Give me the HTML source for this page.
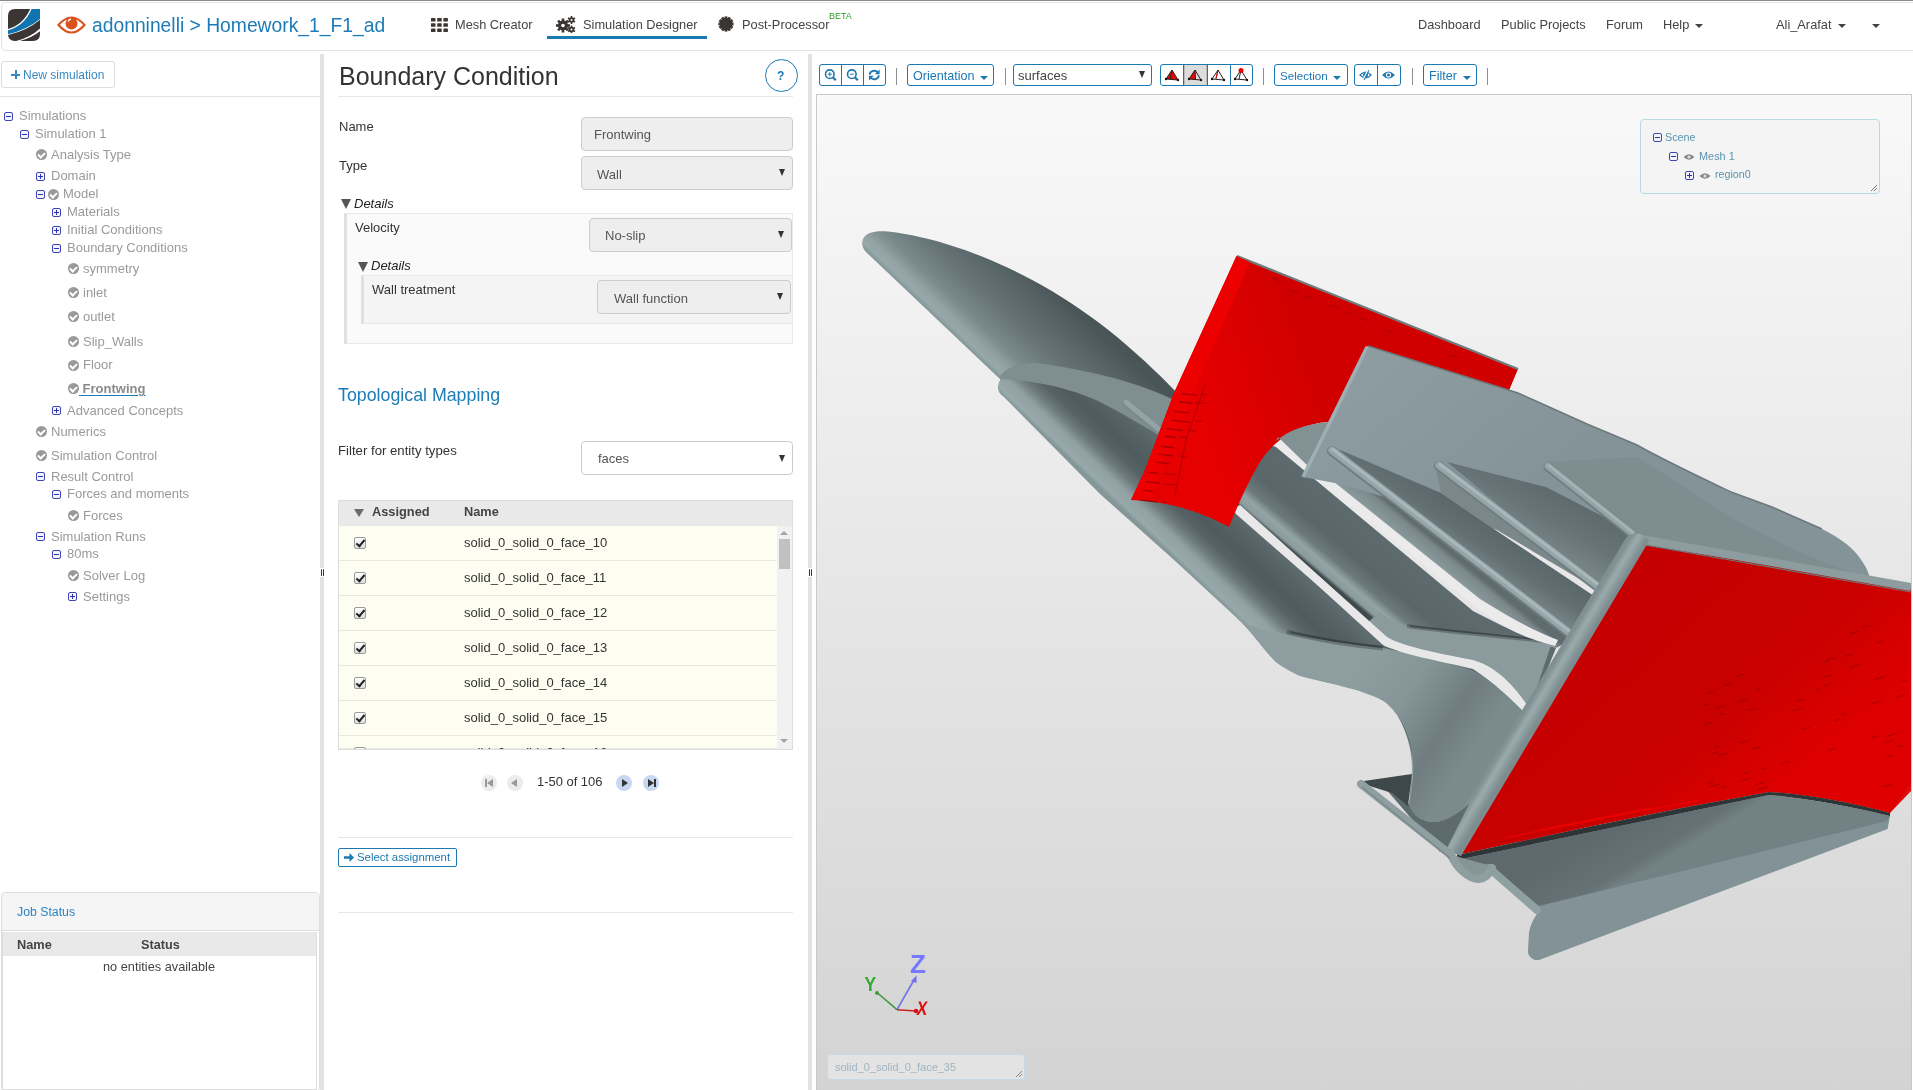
<!DOCTYPE html>
<html><head><meta charset="utf-8">
<style>
*{box-sizing:border-box}
html,body{margin:0;padding:0;width:1913px;height:1090px;overflow:hidden;background:#fff;font-family:"Liberation Sans",sans-serif;color:#333;-webkit-font-smoothing:antialiased}
.a{will-change:transform}
.a{position:absolute;white-space:nowrap}
#topline{position:absolute;left:0;top:0;width:1913px;height:1px;background:#8a8a8a}
#nav{position:absolute;left:1px;top:2px;width:1920px;height:49px;border:1px solid #e3e3e3;border-radius:4px;background:#fff}
.nt{font-size:12.8px;color:#444;line-height:14px}
.tree{font-size:13px;color:#9a9a9a;line-height:14px}
.ex{position:absolute;width:9px;height:9px;border:1px solid #3d45b5;border-radius:2px;background:#f4f4ff}
.ex:before{content:"";position:absolute;left:1px;top:3px;width:5px;height:1px;background:#2a33b0}
.ex.p:after{content:"";position:absolute;left:3px;top:1px;width:1px;height:5px;background:#2a33b0}
.ck{position:absolute;width:11px;height:11px;border-radius:50%;background:#999}
.ck:after{content:"";position:absolute;left:3px;top:2px;width:3px;height:5px;border:solid #fff;border-width:0 2px 2px 0;transform:rotate(45deg)}
.lbl{font-size:13px;color:#333;line-height:14px}
.inp{position:absolute;background:#eee;border:1px solid #ccc;border-radius:4px}
.sel:after{content:"";position:absolute;right:8px;top:14px;border-left:3px solid transparent;border-right:3px solid transparent;border-top:6px solid #333}
.it{font-size:13px;color:#555;line-height:14px}
.tb{position:absolute;top:64px;height:22px;border:1px solid #1b78b0;border-radius:3px;background:#fff}
.tbt{font-size:12.6px;color:#1b78b0;line-height:14px}
.sep{position:absolute;top:68px;width:2px;height:16px;background:#666}
.row{position:absolute;left:339px;width:438px;height:35px;background:#fdfdf1;border-bottom:1px solid #e6e6e6}
.cb{position:absolute;left:15px;width:12px;height:12px;border:1px solid #999;border-radius:2px;background:linear-gradient(#fff,#ddd)}
.cb:after{content:"";position:absolute;left:3px;top:0px;width:3px;height:7px;border:solid #222;border-width:0 2px 2px 0;transform:rotate(40deg)}
.rn{position:absolute;left:125px;font-size:13px;color:#333;line-height:14px}
</style></head><body>
<div id="topline"></div>
<div id="nav"></div>

<!-- logo -->
<svg class="a" style="left:8px;top:9px" width="32" height="32" viewBox="0 0 32 32">
<defs><clipPath id="lc"><path d="M0 0H32V25Q32 32 25 32H7Q0 32 0 25V7Q0 0 7 0Z"/></clipPath></defs>
<g clip-path="url(#lc)">
<rect width="32" height="32" fill="#3b3633"/>
<path d="M22.6 -1 Q15 17 -2 20.4 L-2 26.5 Q20 22 34 9 L34 -1Z" fill="#fff"/>
<path d="M24 -1 Q16.5 18 -2 21.6 L-2 25.6 Q20 21 34 8.2 L34 -1Z" fill="#0f74b0"/>
<path d="M34 17.5 Q23 29 4 33 L8 33 Q25 29 34 20.5Z" fill="#fff"/>
</g></svg>
<!-- eye -->
<svg class="a" style="left:57px;top:15px" width="29" height="20" viewBox="0 0 29 20">
<path d="M1.5 10 Q14.5 -5 27.5 10 Q14.5 25 1.5 10Z" fill="none" stroke="#d9531e" stroke-width="2.2"/>
<circle cx="14.5" cy="8.5" r="6" fill="#d9531e"/>
<path d="M11 6.5 Q12 4.5 14 4" stroke="#fff" stroke-width="1.3" fill="none"/>
</svg>
<div class="a" style="left:92px;top:15px;font-size:19.3px;color:#1c7cb8;line-height:22px">adonninelli &gt; Homework_1_F1_ad</div>

<!-- nav items -->
<svg class="a" style="left:431px;top:18px" width="17" height="14" viewBox="0 0 17 14" fill="#3b3633">
<rect x="0" y="0" width="4.5" height="3.6" rx=".6"/><rect x="6.2" y="0" width="4.5" height="3.6" rx=".6"/><rect x="12.4" y="0" width="4.5" height="3.6" rx=".6"/>
<rect x="0" y="5.2" width="4.5" height="3.6" rx=".6"/><rect x="6.2" y="5.2" width="4.5" height="3.6" rx=".6"/><rect x="12.4" y="5.2" width="4.5" height="3.6" rx=".6"/>
<rect x="0" y="10.4" width="4.5" height="3.6" rx=".6"/><rect x="6.2" y="10.4" width="4.5" height="3.6" rx=".6"/><rect x="12.4" y="10.4" width="4.5" height="3.6" rx=".6"/>
</svg>
<div class="a nt" style="left:455px;top:18px">Mesh Creator</div>
<svg class="a" style="left:556px;top:16px" width="20" height="17" viewBox="0 0 20 17">
<g fill="#3b3633"><circle cx="7" cy="9.5" r="5"/>
<g transform="translate(7 9.5)"><rect x="-1.3" y="-7" width="2.6" height="14"/><rect x="-1.3" y="-7" width="2.6" height="14" transform="rotate(45)"/><rect x="-1.3" y="-7" width="2.6" height="14" transform="rotate(90)"/><rect x="-1.3" y="-7" width="2.6" height="14" transform="rotate(135)"/></g>
<circle cx="15.5" cy="4" r="2.8"/><g transform="translate(15.5 4)"><rect x="-.8" y="-4" width="1.6" height="8"/><rect x="-.8" y="-4" width="1.6" height="8" transform="rotate(60)"/><rect x="-.8" y="-4" width="1.6" height="8" transform="rotate(120)"/></g>
<circle cx="15.5" cy="13.5" r="2.8"/><g transform="translate(15.5 13.5)"><rect x="-.8" y="-4" width="1.6" height="8"/><rect x="-.8" y="-4" width="1.6" height="8" transform="rotate(60)"/><rect x="-.8" y="-4" width="1.6" height="8" transform="rotate(120)"/></g>
</g>
<g fill="#fff"><circle cx="7" cy="9.5" r="1.8"/><circle cx="15.5" cy="4" r="1"/><circle cx="15.5" cy="13.5" r="1"/></g>
</svg>
<div class="a nt" style="left:583px;top:18px">Simulation Designer</div>
<div class="a" style="left:547px;top:36px;width:160px;height:3px;background:#1b78b0"></div>
<svg class="a" style="left:718px;top:16px" width="16" height="16" viewBox="0 0 16 16"><g fill="#3b3633" transform="translate(8 8)">
<circle r="6.3"/><rect x="-1.4" y="-7.6" width="2.8" height="15.2"/><rect x="-1.4" y="-7.6" width="2.8" height="15.2" transform="rotate(30)"/><rect x="-1.4" y="-7.6" width="2.8" height="15.2" transform="rotate(60)"/><rect x="-1.4" y="-7.6" width="2.8" height="15.2" transform="rotate(90)"/><rect x="-1.4" y="-7.6" width="2.8" height="15.2" transform="rotate(120)"/><rect x="-1.4" y="-7.6" width="2.8" height="15.2" transform="rotate(150)"/></g></svg>
<div class="a nt" style="left:742px;top:18px">Post-Processor</div>
<div class="a" style="left:829px;top:11px;font-size:9px;color:#2ea02e;line-height:10px">BETA</div>

<div class="a nt" style="left:1418px;top:18px">Dashboard</div>
<div class="a nt" style="left:1501px;top:18px">Public Projects</div>
<div class="a nt" style="left:1606px;top:18px">Forum</div>
<div class="a nt" style="left:1663px;top:18px">Help</div>
<div class="a" style="left:1695px;top:24px;border-left:4px solid transparent;border-right:4px solid transparent;border-top:4px solid #444"></div>
<div class="a nt" style="left:1776px;top:18px">Ali_Arafat</div>
<div class="a" style="left:1838px;top:24px;border-left:4px solid transparent;border-right:4px solid transparent;border-top:4px solid #444"></div>
<div class="a" style="left:1872px;top:24px;border-left:4px solid transparent;border-right:4px solid transparent;border-top:4px solid #444"></div>

<!-- SIDEBAR -->
<div class="a" style="left:1px;top:61px;width:114px;height:27px;border:1px solid #ddd;border-radius:3px"></div>
<div class="a" style="left:11px;top:70px;width:9px;height:9px"><div class="a" style="left:3.5px;top:0;width:2.2px;height:9px;background:#3a8ac0"></div><div class="a" style="left:0;top:3.5px;width:9px;height:2.2px;background:#3a8ac0"></div></div>
<div class="a" style="left:23px;top:68px;font-size:12px;color:#3a8ac0;line-height:14px">New simulation</div>
<div class="a" style="left:0;top:96px;width:320px;height:1px;background:#e3e3e3"></div>
<div class="a" style="left:320px;top:54px;width:4px;height:1036px;background:#e3e3e3"></div>
<div class="a" style="left:808px;top:54px;width:4px;height:1036px;background:#e3e3e3"></div>


<div class="a" style="left:320px;top:568px;width:4px;height:9px;background:#fff"></div>
<div class="a" style="left:321px;top:569px;width:1.2px;height:7px;background:#333;border-radius:1px"></div>
<div class="a" style="left:323px;top:569px;width:1.2px;height:7px;background:#333;border-radius:1px"></div>
<div class="a" style="left:808px;top:568px;width:4px;height:9px;background:#fff"></div>
<div class="a" style="left:809px;top:569px;width:1.2px;height:7px;background:#333;border-radius:1px"></div>
<div class="a" style="left:811px;top:569px;width:1.2px;height:7px;background:#333;border-radius:1px"></div>
<div class="ex" style="left:4px;top:111.8px"></div>
<div class="a" style="left:19px;top:109.30px;font-size:13px;line-height:13px;color:#9a9a9a;font-weight:400;font-style:normal;">Simulations</div>
<div class="ex" style="left:20px;top:129.7px"></div>
<div class="a" style="left:35px;top:127.20px;font-size:13px;line-height:13px;color:#9a9a9a;font-weight:400;font-style:normal;">Simulation 1</div>
<div class="ck" style="left:36px;top:149.2px"></div>
<div class="a" style="left:51px;top:147.80px;font-size:13px;line-height:13px;color:#9a9a9a;font-weight:400;font-style:normal;">Analysis Type</div>
<div class="ex p" style="left:36px;top:171.5px"></div>
<div class="a" style="left:51px;top:169.00px;font-size:13px;line-height:13px;color:#9a9a9a;font-weight:400;font-style:normal;">Domain</div>
<div class="ex" style="left:36px;top:189.8px"></div>
<div class="ck" style="left:48px;top:188.7px"></div>
<div class="a" style="left:63px;top:187.30px;font-size:13px;line-height:13px;color:#9a9a9a;font-weight:400;font-style:normal;">Model</div>
<div class="ex p" style="left:52px;top:207.5px"></div>
<div class="a" style="left:67px;top:205.00px;font-size:13px;line-height:13px;color:#9a9a9a;font-weight:400;font-style:normal;">Materials</div>
<div class="ex p" style="left:52px;top:225.5px"></div>
<div class="a" style="left:67px;top:223.00px;font-size:13px;line-height:13px;color:#9a9a9a;font-weight:400;font-style:normal;">Initial Conditions</div>
<div class="ex" style="left:52px;top:243.5px"></div>
<div class="a" style="left:67px;top:241.00px;font-size:13px;line-height:13px;color:#9a9a9a;font-weight:400;font-style:normal;">Boundary Conditions</div>
<div class="ck" style="left:68px;top:263.2px"></div>
<div class="a" style="left:83px;top:261.80px;font-size:13px;line-height:13px;color:#9a9a9a;font-weight:400;font-style:normal;">symmetry</div>
<div class="ck" style="left:68px;top:287.3px"></div>
<div class="a" style="left:83px;top:285.90px;font-size:13px;line-height:13px;color:#9a9a9a;font-weight:400;font-style:normal;">inlet</div>
<div class="ck" style="left:68px;top:311.4px"></div>
<div class="a" style="left:83px;top:310.00px;font-size:13px;line-height:13px;color:#9a9a9a;font-weight:400;font-style:normal;">outlet</div>
<div class="ck" style="left:68px;top:336.4px"></div>
<div class="a" style="left:83px;top:335.00px;font-size:13px;line-height:13px;color:#9a9a9a;font-weight:400;font-style:normal;">Slip_Walls</div>
<div class="ck" style="left:68px;top:359.8px"></div>
<div class="a" style="left:83px;top:358.40px;font-size:13px;line-height:13px;color:#9a9a9a;font-weight:400;font-style:normal;">Floor</div>
<div class="ck" style="left:68px;top:383.4px"></div>
<div class="a" style="left:79px;top:382.00px;font-size:13px;line-height:13px;color:#8a8a8a;font-weight:700;font-style:normal;text-decoration:underline;text-decoration-color:#1c7cb8;text-underline-offset:2px">&nbsp;Frontwing</div>
<div class="ex p" style="left:52px;top:406.1px"></div>
<div class="a" style="left:67px;top:403.60px;font-size:13px;line-height:13px;color:#9a9a9a;font-weight:400;font-style:normal;">Advanced Concepts</div>
<div class="ck" style="left:36px;top:426.0px"></div>
<div class="a" style="left:51px;top:424.60px;font-size:13px;line-height:13px;color:#9a9a9a;font-weight:400;font-style:normal;">Numerics</div>
<div class="ck" style="left:36px;top:450.0px"></div>
<div class="a" style="left:51px;top:448.60px;font-size:13px;line-height:13px;color:#9a9a9a;font-weight:400;font-style:normal;">Simulation Control</div>
<div class="ex" style="left:36px;top:472.4px"></div>
<div class="a" style="left:51px;top:469.90px;font-size:13px;line-height:13px;color:#9a9a9a;font-weight:400;font-style:normal;">Result Control</div>
<div class="ex" style="left:52px;top:489.9px"></div>
<div class="a" style="left:67px;top:487.40px;font-size:13px;line-height:13px;color:#9a9a9a;font-weight:400;font-style:normal;">Forces and moments</div>
<div class="ck" style="left:68px;top:509.9px"></div>
<div class="a" style="left:83px;top:508.50px;font-size:13px;line-height:13px;color:#9a9a9a;font-weight:400;font-style:normal;">Forces</div>
<div class="ex" style="left:36px;top:532.2px"></div>
<div class="a" style="left:51px;top:529.70px;font-size:13px;line-height:13px;color:#9a9a9a;font-weight:400;font-style:normal;">Simulation Runs</div>
<div class="ex" style="left:52px;top:549.8px"></div>
<div class="a" style="left:67px;top:547.30px;font-size:13px;line-height:13px;color:#9a9a9a;font-weight:400;font-style:normal;">80ms</div>
<div class="ck" style="left:68px;top:570.0px"></div>
<div class="a" style="left:83px;top:568.60px;font-size:13px;line-height:13px;color:#9a9a9a;font-weight:400;font-style:normal;">Solver Log</div>
<div class="ex p" style="left:68px;top:592.1px"></div>
<div class="a" style="left:83px;top:589.60px;font-size:13px;line-height:13px;color:#9a9a9a;font-weight:400;font-style:normal;">Settings</div>
<div class="a" style="left:1px;top:892px;width:319px;height:200px;border:1px solid #ddd;border-radius:4px;background:#fff"></div>
<div class="a" style="left:2px;top:893px;width:317px;height:38px;background:#f5f5f5;border-bottom:1px solid #ddd;border-radius:4px 4px 0 0"></div>
<div class="a" style="left:16.5px;top:906.19px;font-size:12.3px;line-height:12.3px;color:#2a86c0;font-weight:400;font-style:normal;">Job Status</div>
<div class="a" style="left:2px;top:932px;width:315px;height:158px;border:1px solid #ddd;border-top:0;background:#fff"></div>
<div class="a" style="left:3px;top:932px;width:313px;height:24px;background:#e9e9e9"></div>
<div class="a" style="left:17.3px;top:938.56px;font-size:12.8px;line-height:12.8px;color:#444;font-weight:700;font-style:normal;">Name</div>
<div class="a" style="left:141.4px;top:938.65px;font-size:12.7px;line-height:12.7px;color:#444;font-weight:700;font-style:normal;">Status</div>
<div class="a" style="left:102.8px;top:960.81px;font-size:12.75px;line-height:12.75px;color:#444;font-weight:400;font-style:normal;">no entities available</div>
<div class="a" style="left:339px;top:63.64px;font-size:25px;line-height:25px;color:#333;font-weight:400;font-style:normal;">Boundary Condition</div>
<div class="a" style="left:338px;top:96px;width:455px;height:1px;background:#e6e6e6"></div>
<div class="a" style="left:765px;top:59px;width:33px;height:33px;border:1px solid #1b78b0;border-radius:50%"></div>
<div class="a" style="left:776.5px;top:69.84px;font-size:12px;line-height:12px;color:#1b78b0;font-weight:700;font-style:normal;">?</div>
<div class="a" style="left:338.5px;top:120.00px;font-size:13px;line-height:13px;color:#333;font-weight:400;font-style:normal;">Name</div>
<div class="a" style="left:581px;top:117px;width:212px;height:34px;background:#eee;border:1px solid #ccc;border-radius:4px"></div>
<div class="a" style="left:593.6px;top:127.70px;font-size:13px;line-height:13px;color:#555;font-weight:400;font-style:normal;">Frontwing</div>
<div class="a" style="left:338.5px;top:159.00px;font-size:13px;line-height:13px;color:#333;font-weight:400;font-style:normal;">Type</div>
<div class="a" style="left:581px;top:156px;width:212px;height:34px;background:#eee;border:1px solid #ccc;border-radius:4px"></div>
<div class="a" style="left:597.3px;top:167.50px;font-size:13px;line-height:13px;color:#555;font-weight:400;font-style:normal;">Wall</div>
<div class="a" style="left:779px;top:169px;width:0px;height:0px;border-left:3.5px solid transparent;border-right:3.5px solid transparent;border-top:7px solid #333"></div>
<div class="a" style="left:341px;top:199px;width:0;height:0;border-left:5.5px solid transparent;border-right:5.5px solid transparent;border-top:10px solid #555"></div>
<div class="a" style="left:354px;top:196.90px;font-size:13px;line-height:13px;color:#222;font-weight:400;font-style:italic;">Details</div>
<div class="a" style="left:344px;top:213px;width:449px;height:131px;background:#fafafa;border:1px solid #e8e8e8;border-left:3px solid #e0e0e0"></div>
<div class="a" style="left:355px;top:221.00px;font-size:13px;line-height:13px;color:#333;font-weight:400;font-style:normal;">Velocity</div>
<div class="a" style="left:589px;top:218px;width:203px;height:34px;background:#eee;border:1px solid #ccc;border-radius:4px"></div>
<div class="a" style="left:605.3px;top:229.00px;font-size:13px;line-height:13px;color:#555;font-weight:400;font-style:normal;">No-slip</div>
<div class="a" style="left:778px;top:231px;width:0px;height:0px;border-left:3.5px solid transparent;border-right:3.5px solid transparent;border-top:7px solid #333"></div>
<div class="a" style="left:358px;top:262px;width:0;height:0;border-left:5.5px solid transparent;border-right:5.5px solid transparent;border-top:10px solid #555"></div>
<div class="a" style="left:371.2px;top:259.40px;font-size:13px;line-height:13px;color:#222;font-weight:400;font-style:italic;">Details</div>
<div class="a" style="left:361px;top:275px;width:431px;height:49px;background:#f4f4f4;border-top:1px solid #e8e8e8;border-bottom:1px solid #e8e8e8;border-left:3px solid #e0e0e0"></div>
<div class="a" style="left:372px;top:283.00px;font-size:13px;line-height:13px;color:#333;font-weight:400;font-style:normal;">Wall treatment</div>
<div class="a" style="left:597px;top:280px;width:194px;height:34px;background:#eee;border:1px solid #ccc;border-radius:4px"></div>
<div class="a" style="left:613.8px;top:291.60px;font-size:13px;line-height:13px;color:#555;font-weight:400;font-style:normal;">Wall function</div>
<div class="a" style="left:777px;top:293px;width:0px;height:0px;border-left:3.5px solid transparent;border-right:3.5px solid transparent;border-top:7px solid #333"></div>
<div class="a" style="left:338.3px;top:386.73px;font-size:17.8px;line-height:17.8px;color:#1c7cb8;font-weight:400;font-style:normal;">Topological Mapping</div>
<div class="a" style="left:338px;top:444.23px;font-size:13.2px;line-height:13.2px;color:#333;font-weight:400;font-style:normal;">Filter for entity types</div>
<div class="a" style="left:581px;top:441px;width:212px;height:34px;background:#fff;border:1px solid #ccc;border-radius:4px"></div>
<div class="a" style="left:597.6px;top:452.20px;font-size:13px;line-height:13px;color:#555;font-weight:400;font-style:normal;">faces</div>
<div class="a" style="left:779px;top:455px;width:0px;height:0px;border-left:3.5px solid transparent;border-right:3.5px solid transparent;border-top:7px solid #333"></div>
<div class="a" style="left:338px;top:500px;width:455px;height:250px;border:1px solid #ddd;background:#fff"></div>
<div class="a" style="left:339px;top:501px;width:453px;height:25px;background:#e9e9e9"></div>
<div class="a" style="left:354px;top:509px;width:0;height:0;border-left:5px solid transparent;border-right:5px solid transparent;border-top:8px solid #6a6a6a"></div>
<div class="a" style="left:371.5px;top:505.96px;font-size:12.8px;line-height:12.8px;color:#444;font-weight:700;font-style:normal;">Assigned</div>
<div class="a" style="left:464.3px;top:505.96px;font-size:12.8px;line-height:12.8px;color:#444;font-weight:700;font-style:normal;">Name</div>
<div class="a" style="left:339px;top:526px;width:438px;height:35px;background:#fdfdf1;border-bottom:1px solid #e9e9e1;overflow:hidden"></div>
<div class="cb" style="left:354px;top:536.5px"></div>
<div class="a" style="left:464.3px;top:536.40px;font-size:13px;line-height:13px;color:#333;font-weight:400;font-style:normal;">solid_0_solid_0_face_10</div>
<div class="a" style="left:339px;top:561px;width:438px;height:35px;background:#fdfdf1;border-bottom:1px solid #e9e9e1;overflow:hidden"></div>
<div class="cb" style="left:354px;top:571.5px"></div>
<div class="a" style="left:464.3px;top:571.40px;font-size:13px;line-height:13px;color:#333;font-weight:400;font-style:normal;">solid_0_solid_0_face_11</div>
<div class="a" style="left:339px;top:596px;width:438px;height:35px;background:#fdfdf1;border-bottom:1px solid #e9e9e1;overflow:hidden"></div>
<div class="cb" style="left:354px;top:606.5px"></div>
<div class="a" style="left:464.3px;top:606.40px;font-size:13px;line-height:13px;color:#333;font-weight:400;font-style:normal;">solid_0_solid_0_face_12</div>
<div class="a" style="left:339px;top:631px;width:438px;height:35px;background:#fdfdf1;border-bottom:1px solid #e9e9e1;overflow:hidden"></div>
<div class="cb" style="left:354px;top:641.5px"></div>
<div class="a" style="left:464.3px;top:641.40px;font-size:13px;line-height:13px;color:#333;font-weight:400;font-style:normal;">solid_0_solid_0_face_13</div>
<div class="a" style="left:339px;top:666px;width:438px;height:35px;background:#fdfdf1;border-bottom:1px solid #e9e9e1;overflow:hidden"></div>
<div class="cb" style="left:354px;top:676.5px"></div>
<div class="a" style="left:464.3px;top:676.40px;font-size:13px;line-height:13px;color:#333;font-weight:400;font-style:normal;">solid_0_solid_0_face_14</div>
<div class="a" style="left:339px;top:701px;width:438px;height:35px;background:#fdfdf1;border-bottom:1px solid #e9e9e1;overflow:hidden"></div>
<div class="cb" style="left:354px;top:711.5px"></div>
<div class="a" style="left:464.3px;top:711.40px;font-size:13px;line-height:13px;color:#333;font-weight:400;font-style:normal;">solid_0_solid_0_face_15</div>
<div class="a" style="left:339px;top:736px;width:438px;height:13px;background:#fdfdf1;border-bottom:1px solid #e9e9e1;overflow:hidden"></div>
<div class="a" style="left:339px;top:736px;width:438px;height:13px;overflow:hidden"><div class="cb" style="left:15px;top:10.5px"></div><div class="a" style="left:125px;top:10px;font-size:13px;line-height:13px;color:#333">solid_0_solid_0_face_16</div></div>
<div class="a" style="left:777px;top:526px;width:15px;height:223px;background:#f1f1f1"></div>
<div class="a" style="left:779px;top:539px;width:11px;height:30px;background:#c1c1c1"></div>
<div class="a" style="left:780px;top:531px;width:0;height:0;border-left:4px solid transparent;border-right:4px solid transparent;border-bottom:4px solid #a3a3a3"></div>
<div class="a" style="left:780px;top:739px;width:0;height:0;border-left:4px solid transparent;border-right:4px solid transparent;border-top:4px solid #a3a3a3"></div>
<div class="a" style="left:481px;top:775px;width:16px;height:16px;border-radius:50%;background:#ececec"></div>
<div class="a" style="left:507px;top:775px;width:16px;height:16px;border-radius:50%;background:#ececec"></div>
<div class="a" style="left:616px;top:775px;width:16px;height:16px;border-radius:50%;background:#c8d8f3"></div>
<div class="a" style="left:643px;top:775px;width:16px;height:16px;border-radius:50%;background:#c8d8f3"></div>
<div class="a" style="left:485px;top:779px;width:2px;height:8px;background:#999"></div><div class="a" style="left:487px;top:779px;border-top:4px solid transparent;border-bottom:4px solid transparent;border-right:6px solid #999"></div>
<div class="a" style="left:511px;top:779px;border-top:4px solid transparent;border-bottom:4px solid transparent;border-right:6px solid #999"></div>
<div class="a" style="left:622px;top:779px;border-top:4px solid transparent;border-bottom:4px solid transparent;border-left:6px solid #333"></div>
<div class="a" style="left:648px;top:779px;border-top:4px solid transparent;border-bottom:4px solid transparent;border-left:6px solid #333"></div><div class="a" style="left:654px;top:779px;width:2px;height:8px;background:#333"></div>
<div class="a" style="left:536.8px;top:776.04px;font-size:12.95px;line-height:12.95px;color:#333;font-weight:400;font-style:normal;">1-50 of 106</div>
<div class="a" style="left:338px;top:837px;width:455px;height:1px;background:#e6e6e6"></div>
<div class="a" style="left:338px;top:848px;width:119px;height:19px;border:1px solid #1b78b0;border-radius:2px;background:#fff"></div>
<svg class="a" style="left:344px;top:852px" width="10" height="11" viewBox="0 0 10 11"><path d="M0 4.2H5.5V1L10 5.5 5.5 10V6.8H0Z" fill="#1b78b0"/></svg>
<div class="a" style="left:356.8px;top:851.85px;font-size:11.4px;line-height:11.4px;color:#1b78b0;font-weight:400;font-style:normal;">Select assignment</div>
<div class="a" style="left:338px;top:912px;width:455px;height:1px;background:#e6e6e6"></div>
<div class="a" style="left:816px;top:94px;width:1096px;height:1000px;border:1px solid #c9c9c9;background:linear-gradient(#f9f9f9,#d3d3d3)"></div>
<div class="a" style="left:819px;top:64px;width:67px;height:22px;border:1px solid #1b78b0;border-radius:3px;background:#fff"></div>
<div class="a" style="left:841px;top:64px;width:1px;height:22px;background:#1b78b0"></div>
<div class="a" style="left:863px;top:64px;width:1px;height:22px;background:#1b78b0"></div>
<svg class="a" style="left:819px;top:64px" width="67" height="22" viewBox="0 0 67 22"><g fill="none" stroke="#1b78b0" stroke-width="1.6"><circle cx="10.8" cy="10.2" r="4.3"/><path d="M13.8 13.2L16.8 16.2" stroke-width="2.2"/><path d="M8.8 10.2H12.8M10.8 8.2V12.2" stroke-width="1"/><circle cx="32.8" cy="10.2" r="4.3"/><path d="M35.8 13.2L38.8 16.2" stroke-width="2.2"/><path d="M30.8 10.2H34.8" stroke-width="1"/><path d="M50.6 10.6A4.7 4.7 0 0 1 58.6 8.2M60 11.4A4.7 4.7 0 0 1 52 13.8" stroke-width="1.9"/></g><path d="M60.6 5.4V10.2H55.8Z M50 16.6V11.8H54.8Z" fill="#1b78b0"/></svg>
<div class="a" style="left:896px;top:67.5px;width:1.4px;height:16.5px;background:#8f8f8f"></div>
<div class="a" style="left:907px;top:64px;width:87px;height:22px;border:1px solid #1b78b0;border-radius:3px;background:#fff"></div>
<div class="a tbt" style="left:913px;top:69px;font-size:12.6px;color:#1b78b0;line-height:14px">Orientation</div>
<div class="a" style="left:980px;top:76px;border-left:4px solid transparent;border-right:4px solid transparent;border-top:4px solid #1b78b0"></div>
<div class="a" style="left:1005px;top:67.5px;width:1.4px;height:16.5px;background:#8f8f8f"></div>
<div class="a" style="left:1013px;top:64px;width:139px;height:22px;border:1px solid #1b78b0;border-radius:3px;background:#fff"></div>
<div class="a" style="left:1018px;top:69px;font-size:13px;color:#444;line-height:14px">surfaces</div>
<div class="a" style="left:1139px;top:71px;border-left:3.5px solid transparent;border-right:3.5px solid transparent;border-top:7px solid #333"></div>
<div class="a" style="left:1160px;top:64px;width:93px;height:22px;border:1px solid #1b78b0;border-radius:3px;background:#fff"></div>
<div class="a" style="left:1184px;top:65px;width:23px;height:20px;background:#dcdcdc;border-left:1px solid #bbb;border-right:1px solid #bbb"></div>
<div class="a" style="left:1183px;top:64px;width:1px;height:22px;background:#1b78b0"></div>
<div class="a" style="left:1207px;top:64px;width:1px;height:22px;background:#1b78b0"></div>
<div class="a" style="left:1230px;top:64px;width:1px;height:22px;background:#1b78b0"></div>
<svg class="a" style="left:1163px;top:66px" width="18" height="18" viewBox="0 0 18 18"><path d="M9 4L15 14 3 13Z" fill="#e00"/><path d="M9 4L15 14 3 13Z M9 4L7 13" fill="none" stroke="#222" stroke-width="1"/><circle cx="3" cy="13" r="1.2" fill="#111"/><circle cx="15" cy="14" r="1.2" fill="#111"/></svg>
<svg class="a" style="left:1186px;top:66px" width="18" height="18" viewBox="0 0 18 18"><path d="M9 4L9.5 13.5 3 13Z" fill="#e00"/><path d="M9 4L15 14 3 13Z M9 4L9.5 13.5" fill="none" stroke="#222" stroke-width="1"/><circle cx="3" cy="13" r="1.2" fill="#111"/><circle cx="15" cy="14" r="1.2" fill="#111"/></svg>
<svg class="a" style="left:1209px;top:66px" width="18" height="18" viewBox="0 0 18 18"><path d="M9 4L15 14 3 13Z M9 4L7 13" fill="none" stroke="#222" stroke-width="1"/><path d="M9 5L7 12" stroke="#e00" stroke-width="1"/><circle cx="3" cy="13" r="1.2" fill="#111"/><circle cx="15" cy="14" r="1.2" fill="#111"/></svg>
<svg class="a" style="left:1232px;top:66px" width="18" height="18" viewBox="0 0 18 18"><path d="M9 4L15 14 3 13Z M9 4L7 13" fill="none" stroke="#222" stroke-width="1"/><circle cx="9" cy="4.5" r="2.5" fill="#e00"/><circle cx="3" cy="13" r="1.2" fill="#111"/><circle cx="15" cy="14" r="1.2" fill="#111"/></svg>
<div class="a" style="left:1263px;top:67.5px;width:1.4px;height:16.5px;background:#8f8f8f"></div>
<div class="a" style="left:1274px;top:64px;width:74px;height:22px;border:1px solid #1b78b0;border-radius:3px;background:#fff"></div>
<div class="a" style="left:1280px;top:69px;font-size:11.6px;color:#1b78b0;line-height:14px">Selection</div>
<div class="a" style="left:1333px;top:76px;border-left:4px solid transparent;border-right:4px solid transparent;border-top:4px solid #1b78b0"></div>
<div class="a" style="left:1354px;top:64px;width:47px;height:22px;border:1px solid #1b78b0;border-radius:3px;background:#fff"></div>
<div class="a" style="left:1377px;top:64px;width:1px;height:22px;background:#1b78b0"></div>
<svg class="a" style="left:1354px;top:64px" width="47" height="22" viewBox="0 0 47 22"><g fill="#1b78b0"><path d="M5 11Q11.5 4 18 11Q11.5 18 5 11ZM7 11Q11.5 16 16 11Q11.5 6 7 11Z"/><circle cx="11.5" cy="11" r="2.5"/><path d="M28 11Q34.5 4 41 11Q34.5 18 28 11Z"/></g><circle cx="34.5" cy="11" r="2.6" fill="#fff"/><circle cx="34.5" cy="11" r="1.5" fill="#1b78b0"/><path d="M9 16L14 6" stroke="#fff" stroke-width="1.5"/><path d="M10 16L15 6" stroke="#1b78b0" stroke-width="1"/></svg>
<div class="a" style="left:1412px;top:67.5px;width:1.4px;height:16.5px;background:#8f8f8f"></div>
<div class="a" style="left:1423px;top:64px;width:54px;height:22px;border:1px solid #1b78b0;border-radius:3px;background:#fff"></div>
<div class="a" style="left:1429px;top:69px;font-size:12.6px;color:#1b78b0;line-height:14px">Filter</div>
<div class="a" style="left:1463px;top:76px;border-left:4px solid transparent;border-right:4px solid transparent;border-top:4px solid #1b78b0"></div>
<div class="a" style="left:1487px;top:67.5px;width:1.4px;height:16.5px;background:#8f8f8f"></div>
<svg class="a" style="left:0;top:0" width="1913" height="1090" viewBox="0 0 1913 1090"><defs><clipPath id="vpc"><rect x="817" y="95" width="1094" height="995"/></clipPath><linearGradient id="g1" gradientUnits="userSpaceOnUse" x1="927.5" y1="310.3" x2="998.0" y2="236.0"><stop offset="0" stop-color="#839497"/><stop offset="0.05" stop-color="#97a8ab"/><stop offset="0.12" stop-color="#92a2a5"/><stop offset="0.25" stop-color="#7b8a8d"/><stop offset="0.5" stop-color="#667477"/><stop offset="0.8" stop-color="#566366"/><stop offset="1" stop-color="#4a5558"/></linearGradient><linearGradient id="g2" gradientUnits="userSpaceOnUse" x1="1339.8" y1="462.2" x2="1322.0" y2="484.0"><stop offset="0" stop-color="#5f6c6f"/><stop offset="0.2" stop-color="#7b898c"/><stop offset="0.7" stop-color="#8a9a9d"/><stop offset="1" stop-color="#93a3a6"/></linearGradient><linearGradient id="g3" gradientUnits="userSpaceOnUse" x1="1287.1" y1="454.6" x2="1241.7" y2="508.6"><stop offset="0" stop-color="#5e6b6e"/><stop offset="0.5" stop-color="#5a676a"/><stop offset="0.72" stop-color="#6b797c"/><stop offset="0.84" stop-color="#93a4a7"/><stop offset="0.95" stop-color="#8a9a9d"/><stop offset="1" stop-color="#3e4a4c"/></linearGradient><linearGradient id="g4" gradientUnits="userSpaceOnUse" x1="1097.5" y1="485.5" x2="1150.0" y2="430.0"><stop offset="0" stop-color="#859699"/><stop offset="0.05" stop-color="#98a9ac"/><stop offset="0.2" stop-color="#90a0a3"/><stop offset="0.33" stop-color="#6e7c7f"/><stop offset="0.48" stop-color="#566265"/><stop offset="0.62" stop-color="#4f5b5e"/><stop offset="0.85" stop-color="#566366"/><stop offset="1" stop-color="#5f6c6f"/></linearGradient><linearGradient id="g5" gradientUnits="userSpaceOnUse" x1="1360.0" y1="660.0" x2="1480.0" y2="740.0"><stop offset="0" stop-color="#8d9da0"/><stop offset="0.4" stop-color="#859598"/><stop offset="0.75" stop-color="#6f7d80"/><stop offset="1" stop-color="#7b8a8d"/></linearGradient><linearGradient id="g6" gradientUnits="userSpaceOnUse" x1="1190.0" y1="380.0" x2="1300.0" y2="345.0"><stop offset="0" stop-color="#e60000"/><stop offset="1" stop-color="#d10000"/></linearGradient><linearGradient id="g7" gradientUnits="userSpaceOnUse" x1="1360.0" y1="350.0" x2="1500.0" y2="520.0"><stop offset="0" stop-color="#8e9da1"/><stop offset="1" stop-color="#849397"/></linearGradient><linearGradient id="g8" gradientUnits="userSpaceOnUse" x1="1521.9" y1="547.4" x2="1500.0" y2="580.0"><stop offset="0" stop-color="#5b686b"/><stop offset="0.55" stop-color="#637073"/><stop offset="1" stop-color="#758386"/></linearGradient><linearGradient id="g9" gradientUnits="userSpaceOnUse" x1="1571.8" y1="501.8" x2="1546.0" y2="547.0"><stop offset="0" stop-color="#5f6c6f"/><stop offset="0.5" stop-color="#667477"/><stop offset="1" stop-color="#768487"/></linearGradient><linearGradient id="g10" gradientUnits="userSpaceOnUse" x1="1640.0" y1="560.0" x2="1860.0" y2="800.0"><stop offset="0" stop-color="#c50000"/><stop offset="0.45" stop-color="#c80000"/><stop offset="1" stop-color="#e00000"/></linearGradient><linearGradient id="gRT" gradientUnits="userSpaceOnUse" x1="1776" y1="695" x2="1830" y2="765"><stop offset="0" stop-color="#dc0000" stop-opacity="0"/><stop offset="1" stop-color="#de0000" stop-opacity="0.95"/></linearGradient><linearGradient id="g12" gradientUnits="userSpaceOnUse" x1="1632.5" y1="533.8" x2="1646.0" y2="542.0"><stop offset="0" stop-color="#7f8f92"/><stop offset="0.4" stop-color="#9aabae"/><stop offset="1" stop-color="#7d8c8f"/></linearGradient><linearGradient id="g13" gradientUnits="userSpaceOnUse" x1="1600.0" y1="830.0" x2="1630.0" y2="880.0"><stop offset="0" stop-color="#5d696c"/><stop offset="0.8" stop-color="#667376"/><stop offset="1" stop-color="#728184"/></linearGradient></defs><g clip-path="url(#vpc)"><path d="M866 252 C860 246 861 236 870 233 C875 231 882 231 888 231.6 C960 240 1040 278 1098 322 C1130 346 1160 375 1180 396 L1185 415 L1125 402 L1001 380 Z" fill="url(#g1)" />
<path d="M1250 415 L1330 446 L1600 625 L1556 648 C1530 638 1500 622 1478 604 L1280 441 Z" fill="url(#g2)" />
<path d="M1150 400 L1276 447 L1473 611 C1500 625 1530 640 1556 648 L1530 712 C1515 700 1500 682 1473 668 C1440 660 1400 650 1385 638 L1241 508 L1150 440 Z" fill="url(#g3)" />
<path d="M1380 612 C1390 620 1398 624 1407 626 C1450 632 1500 636 1552 642 L1530 708 C1515 692 1500 678 1473 666 C1440 658 1400 650 1385 640 L1368 622 Z" fill="#8a9a9d" />
<path d="M1407 626 C1450 632 1500 636 1552 642" fill="none" stroke="#3c4649" stroke-width="4" opacity=".45"/>
<path d="M1410 626 C1450 631 1500 635 1550 641" fill="none" stroke="#323b3d" stroke-width="1.5" opacity=".6"/>
<path d="M1000 380 C996 388 998 393 1004 397 L1100 494 L1173 559 L1238 619 C1252 632 1262 648 1276 662 C1288 671 1302 677 1330 683 C1357 688 1378 694 1392 707 C1410 732 1414 760 1411 780 L1409 804 C1412 815 1420 821 1433 822 L1469 804 L1530 712 C1515 700 1500 682 1473 668 C1440 660 1400 652 1385 644 L1236 514 L1175 430 L1125 398 C1100 390 1070 380 1050 378 C1030 376 1010 377 1000 379 Z" fill="url(#g4)" />
<path d="M1236 616 C1255 630 1272 633 1290 634 C1320 640 1360 646 1383 648 C1420 656 1460 664 1480 674 C1500 684 1515 700 1527 714 L1469 804 C1460 814 1447 822 1433 822 C1420 821 1410 814 1409 804 C1413 790 1415 765 1411 745 C1405 725 1397 712 1385 702 C1365 690 1335 685 1300 676 C1302 677 1288 671 1276 662 C1262 648 1252 632 1238 619 L1236 616 Z" fill="url(#g5)" />
<path d="M1287 632 C1320 640 1360 646 1383 648" fill="none" stroke="#3c4649" stroke-width="5" opacity=".45"/>
<path d="M1290 632 C1320 639 1360 645 1383 647" fill="none" stroke="#2c3436" stroke-width="1.6" opacity=".6"/>
<path d="M1234 509 L1240 505 L1387 637 C1400 645 1430 652 1473 660 C1500 668 1517 690 1530 709 L1527 715 C1512 700 1495 683 1473 669 C1440 661 1400 654 1383 645 Z" fill="#e8e8e8" />
<path d="M1272 441 L1278 437 L1480 599 C1505 614 1530 630 1558 640 L1555 646 C1530 640 1500 627 1474 605 Z" fill="#ebebeb" />
<path d="M1001 380 C998 372 1010 364 1037 363 C1095 371 1141 384 1172 399 L1178 420 L1162 437 C1140 424 1120 412 1100 402 C1075 390 1040 381 1003 379 Z" fill="#7f8e91" />
<path d="M1126 403 L1165 436" fill="none" stroke="#7b8a8d" stroke-width="8" stroke-linecap="round"/>
<path d="M1126 402 L1166 435" fill="none" stroke="#93a3a6" stroke-width="5" stroke-linecap="round"/>
<path d="M1236.5 256 L1518 369 L1508 393 L1367 346 L1302 476 L1328 422 C1300 424 1275 438 1260 462 C1248 482 1238 505 1229 527 C1205 514 1175 502 1131 500 L1145 470 L1160 430 L1174 393 Z" fill="url(#g6)" />
<path d="M1276 441 C1288 431 1305 424 1328 422 L1308 466 L1278 437 Z" fill="#829194" />
<path d="M1237 256 L1518 369" fill="none" stroke="#6f7d80" stroke-width="2.2"/>
<path d="M1174 393 L1236.5 256 L1250 262 L1190 400 L1150 500 L1131 500 L1145 470 L1160 430 Z" fill="#ec0000" />
<path d="M1181.6 393.6 l15.2 1.8" fill="none" stroke="#700000" stroke-width="1.4" opacity=".55"/>
<path d="M1201.0 394.1 l6.3 0.6" fill="none" stroke="#800000" stroke-width="1.2" opacity=".45"/>
<path d="M1179.0 401.7 l13.5 1.6" fill="none" stroke="#700000" stroke-width="1.4" opacity=".55"/>
<path d="M1194.8 402.4 l11.0 1.1" fill="none" stroke="#800000" stroke-width="1.2" opacity=".45"/>
<path d="M1173.5 411.1 l15.0 1.8" fill="none" stroke="#700000" stroke-width="1.4" opacity=".55"/>
<path d="M1172.1 420.3 l17.8 2.1" fill="none" stroke="#700000" stroke-width="1.4" opacity=".55"/>
<path d="M1195.4 420.5 l6.9 0.7" fill="none" stroke="#800000" stroke-width="1.2" opacity=".45"/>
<path d="M1166.3 428.6 l16.5 2.0" fill="none" stroke="#700000" stroke-width="1.4" opacity=".55"/>
<path d="M1187.1 430.1 l8.2 0.8" fill="none" stroke="#800000" stroke-width="1.2" opacity=".45"/>
<path d="M1164.8 436.2 l10.5 1.3" fill="none" stroke="#700000" stroke-width="1.4" opacity=".55"/>
<path d="M1180.0 436.9 l7.9 0.8" fill="none" stroke="#800000" stroke-width="1.2" opacity=".45"/>
<path d="M1161.4 446.3 l12.4 1.5" fill="none" stroke="#700000" stroke-width="1.4" opacity=".55"/>
<path d="M1158.4 454.1 l14.6 1.8" fill="none" stroke="#700000" stroke-width="1.4" opacity=".55"/>
<path d="M1178.5 456.0 l7.7 0.8" fill="none" stroke="#800000" stroke-width="1.2" opacity=".45"/>
<path d="M1156.2 462.1 l13.3 1.6" fill="none" stroke="#700000" stroke-width="1.4" opacity=".55"/>
<path d="M1148.5 472.2 l10.3 1.2" fill="none" stroke="#700000" stroke-width="1.4" opacity=".55"/>
<path d="M1163.9 473.5 l11.3 1.1" fill="none" stroke="#800000" stroke-width="1.2" opacity=".45"/>
<path d="M1145.7 481.6 l14.8 1.8" fill="none" stroke="#700000" stroke-width="1.4" opacity=".55"/>
<path d="M1164.3 484.0 l11.7 1.2" fill="none" stroke="#800000" stroke-width="1.2" opacity=".45"/>
<path d="M1143.0 490.1 l10.5 1.3" fill="none" stroke="#700000" stroke-width="1.4" opacity=".55"/>
<path d="M1140.2 500.0 l16.6 2.0" fill="none" stroke="#700000" stroke-width="1.4" opacity=".55"/>
<path d="M1160.4 501.6 l6.1 0.6" fill="none" stroke="#800000" stroke-width="1.2" opacity=".45"/>
<path d="M1205 385 L1186 440 L1175 495" fill="none" stroke="#8a0000" stroke-width="1.5" opacity=".4"/>
<path d="M1272 278 l9 3" fill="none" stroke="#800000" stroke-width="1.3" opacity=".45"/>
<path d="M1290 290 l9 3" fill="none" stroke="#800000" stroke-width="1.3" opacity=".45"/>
<path d="M1305 296 l9 3" fill="none" stroke="#800000" stroke-width="1.3" opacity=".45"/>
<path d="M1330 305 l9 3" fill="none" stroke="#800000" stroke-width="1.3" opacity=".45"/>
<path d="M1345 312 l9 3" fill="none" stroke="#800000" stroke-width="1.3" opacity=".45"/>
<path d="M1360 318 l9 3" fill="none" stroke="#800000" stroke-width="1.3" opacity=".45"/>
<path d="M1385 330 l9 3" fill="none" stroke="#800000" stroke-width="1.3" opacity=".45"/>
<path d="M1450 355 l9 3" fill="none" stroke="#800000" stroke-width="1.3" opacity=".45"/>
<path d="M1367 346 L1518 393 L1587 424 L1637 445 L1646 450 C1680 468 1710 482 1731 492 L1772 507 L1822 529 C1840 538 1850 546 1855 552 C1862 560 1867 568 1869 575 L1870 590 L1640 545 L1600 560 L1340 484 L1303 477 Z" fill="url(#g7)" />
<path d="M1368 346 L1518 393 L1587 424 L1637 445 L1646 450 C1680 468 1710 482 1731 492 L1772 507 L1822 529" fill="none" stroke="#6c797c" stroke-width="1.6"/>
<path d="M1367 347 L1303 477" fill="none" stroke="#9db0b3" stroke-width="3.5"/>
<path d="M1338 449 L1441 493 L1485 523 L1600 600 L1572 642 Z" fill="url(#g8)" />
<path d="M1441 493 L1436 470 L1598 590 L1485 523 Z" fill="#7a888b" />
<path d="M1447 462 L1546 487 L1606 518 L1630 535 L1600 590 Z" fill="url(#g9)" />
<path d="M1546 462 L1637 457 L1737 521 L1790 548 L1868 580 L1645 543 L1626 531 Z" fill="#7e8d90" />
<path d="M1332 451 L1578 640" fill="none" stroke="#6f7d80" stroke-width="10" stroke-linecap="round"/>
<path d="M1332 450.2 L1578 639.2" fill="none" stroke="#95a5a8" stroke-width="7.5" stroke-linecap="round"/>
<path d="M1332.8 449.4 L1578.8 638.4" fill="none" stroke="#a8b9bc" stroke-width="2.8" stroke-linecap="round"/>
<path d="M1439 466 L1606 593" fill="none" stroke="#6f7d80" stroke-width="10" stroke-linecap="round"/>
<path d="M1439 465.2 L1606 592.2" fill="none" stroke="#95a5a8" stroke-width="7.5" stroke-linecap="round"/>
<path d="M1439.8 464.4 L1606.8 591.4" fill="none" stroke="#a8b9bc" stroke-width="2.8" stroke-linecap="round"/>
<path d="M1548 467 L1632 534" fill="none" stroke="#6f7d80" stroke-width="9" stroke-linecap="round"/>
<path d="M1548 466.2 L1632 533.2" fill="none" stroke="#93a3a6" stroke-width="6.8" stroke-linecap="round"/>
<path d="M1548.8 465.4 L1632.8 532.4" fill="none" stroke="#a4b5b8" stroke-width="2.5" stroke-linecap="round"/>
<path d="M1643 545 L1909 587 L1912 590 L1912 782 L1890 813 C1850 802 1800 793 1769 792 L1687 807 L1588 827 L1457 855 Z" fill="url(#g10)" />
<path d="M1640 800 C1720 720 1800 640 1912 590 L1912 790 L1890 813 C1850 802 1800 793 1769 792 L1640 816 Z" fill="url(#gRT)" />
<path d="M1792.7 710.8 l10.5 -2.6" fill="none" stroke="#7a0000" stroke-width="1.1" opacity=".45"/>
<path d="M1795.5 701.4 l8.5 -2.1" fill="none" stroke="#7a0000" stroke-width="1.1" opacity=".45"/>
<path d="M1737.9 702.1 l8.8 -2.2" fill="none" stroke="#7a0000" stroke-width="1.1" opacity=".45"/>
<path d="M1862.6 626.9 l6.8 -1.7" fill="none" stroke="#7a0000" stroke-width="1.1" opacity=".45"/>
<path d="M1718.6 755.7 l9.2 -2.3" fill="none" stroke="#7a0000" stroke-width="1.1" opacity=".45"/>
<path d="M1708.6 786.8 l10.8 -2.7" fill="none" stroke="#7a0000" stroke-width="1.1" opacity=".45"/>
<path d="M1834.1 720.8 l5.9 -1.5" fill="none" stroke="#7a0000" stroke-width="1.1" opacity=".45"/>
<path d="M1703.1 705.1 l5.4 -1.3" fill="none" stroke="#7a0000" stroke-width="1.1" opacity=".45"/>
<path d="M1706.2 693.5 l7.6 -1.9" fill="none" stroke="#7a0000" stroke-width="1.1" opacity=".45"/>
<path d="M1872.7 703.4 l8.8 -2.2" fill="none" stroke="#7a0000" stroke-width="1.1" opacity=".45"/>
<path d="M1802.5 729.2 l7.7 -1.9" fill="none" stroke="#7a0000" stroke-width="1.1" opacity=".45"/>
<path d="M1757.0 789.6 l11.0 -2.7" fill="none" stroke="#7a0000" stroke-width="1.1" opacity=".45"/>
<path d="M1872.2 737.4 l6.9 -1.7" fill="none" stroke="#7a0000" stroke-width="1.1" opacity=".45"/>
<path d="M1714.4 747.9 l7.4 -1.9" fill="none" stroke="#7a0000" stroke-width="1.1" opacity=".45"/>
<path d="M1873.5 679.6 l10.7 -2.7" fill="none" stroke="#7a0000" stroke-width="1.1" opacity=".45"/>
<path d="M1743.0 773.8 l7.8 -2.0" fill="none" stroke="#7a0000" stroke-width="1.1" opacity=".45"/>
<path d="M1901.0 681.5 l5.4 -1.4" fill="none" stroke="#7a0000" stroke-width="1.1" opacity=".45"/>
<path d="M1829.0 750.1 l6.6 -1.7" fill="none" stroke="#7a0000" stroke-width="1.1" opacity=".45"/>
<path d="M1897.6 746.4 l5.7 -1.4" fill="none" stroke="#7a0000" stroke-width="1.1" opacity=".45"/>
<path d="M1712.3 753.5 l6.1 -1.5" fill="none" stroke="#7a0000" stroke-width="1.1" opacity=".45"/>
<path d="M1814.7 690.5 l6.1 -1.5" fill="none" stroke="#7a0000" stroke-width="1.1" opacity=".45"/>
<path d="M1850.0 633.6 l8.9 -2.2" fill="none" stroke="#7a0000" stroke-width="1.1" opacity=".45"/>
<path d="M1723.9 685.7 l6.3 -1.6" fill="none" stroke="#7a0000" stroke-width="1.1" opacity=".45"/>
<path d="M1755.3 784.8 l9.8 -2.5" fill="none" stroke="#7a0000" stroke-width="1.1" opacity=".45"/>
<path d="M1762.3 769.3 l6.3 -1.6" fill="none" stroke="#7a0000" stroke-width="1.1" opacity=".45"/>
<path d="M1780.8 763.8 l8.9 -2.2" fill="none" stroke="#7a0000" stroke-width="1.1" opacity=".45"/>
<path d="M1720.6 788.1 l6.3 -1.6" fill="none" stroke="#7a0000" stroke-width="1.1" opacity=".45"/>
<path d="M1752.9 749.1 l7.0 -1.7" fill="none" stroke="#7a0000" stroke-width="1.1" opacity=".45"/>
<path d="M1718.5 714.9 l6.5 -1.6" fill="none" stroke="#7a0000" stroke-width="1.1" opacity=".45"/>
<path d="M1823.3 676.9 l7.7 -1.9" fill="none" stroke="#7a0000" stroke-width="1.1" opacity=".45"/>
<path d="M1896.6 697.1 l8.4 -2.1" fill="none" stroke="#7a0000" stroke-width="1.1" opacity=".45"/>
<path d="M1877.6 642.9 l5.9 -1.5" fill="none" stroke="#7a0000" stroke-width="1.1" opacity=".45"/>
<path d="M1886.2 757.2 l6.5 -1.6" fill="none" stroke="#7a0000" stroke-width="1.1" opacity=".45"/>
<path d="M1738.9 743.1 l10.6 -2.7" fill="none" stroke="#7a0000" stroke-width="1.1" opacity=".45"/>
<path d="M1740.3 781.0 l10.3 -2.6" fill="none" stroke="#7a0000" stroke-width="1.1" opacity=".45"/>
<path d="M1823.7 685.9 l5.6 -1.4" fill="none" stroke="#7a0000" stroke-width="1.1" opacity=".45"/>
<path d="M1707.9 783.3 l6.4 -1.6" fill="none" stroke="#7a0000" stroke-width="1.1" opacity=".45"/>
<path d="M1844.4 656.3 l9.9 -2.5" fill="none" stroke="#7a0000" stroke-width="1.1" opacity=".45"/>
<path d="M1822.3 662.8 l6.1 -1.5" fill="none" stroke="#7a0000" stroke-width="1.1" opacity=".45"/>
<path d="M1746.8 710.7 l10.1 -2.5" fill="none" stroke="#7a0000" stroke-width="1.1" opacity=".45"/>
<path d="M1825.9 660.4 l10.5 -2.6" fill="none" stroke="#7a0000" stroke-width="1.1" opacity=".45"/>
<path d="M1755.2 690.2 l5.4 -1.3" fill="none" stroke="#7a0000" stroke-width="1.1" opacity=".45"/>
<path d="M1736.1 676.4 l8.4 -2.1" fill="none" stroke="#7a0000" stroke-width="1.1" opacity=".45"/>
<path d="M1882.6 786.5 l8.9 -2.2" fill="none" stroke="#7a0000" stroke-width="1.1" opacity=".45"/>
<path d="M1841.7 715.2 l5.8 -1.5" fill="none" stroke="#7a0000" stroke-width="1.1" opacity=".45"/>
<path d="M1886.6 736.2 l10.8 -2.7" fill="none" stroke="#7a0000" stroke-width="1.1" opacity=".45"/>
<path d="M1704.4 724.5 l7.9 -2.0" fill="none" stroke="#7a0000" stroke-width="1.1" opacity=".45"/>
<path d="M1849.8 667.4 l11.0 -2.7" fill="none" stroke="#7a0000" stroke-width="1.1" opacity=".45"/>
<path d="M1715.4 708.3 l9.4 -2.4" fill="none" stroke="#7a0000" stroke-width="1.1" opacity=".45"/>
<path d="M1884.5 742.7 l9.2 -2.3" fill="none" stroke="#7a0000" stroke-width="1.1" opacity=".45"/>
<path d="M1505 838 L1650 808" fill="none" stroke="#f20000" stroke-width="2" opacity=".6"/>
<path d="M1520 842 L1640 818" fill="none" stroke="#f20000" stroke-width="2" opacity=".6"/>
<path d="M1540 830 L1700 800" fill="none" stroke="#f20000" stroke-width="2" opacity=".6"/>
<path d="M1457 855 L1588 827 L1687 807 L1769 792 C1800 793 1850 802 1890 813 L1890 817 C1850 806 1800 797 1769 796 L1457 862 Z" fill="#2f3537" />
<path d="M1641 539 L1911 587" fill="none" stroke="#8c9c9f" stroke-width="8"/>
<path d="M1645 545 L1911 592" fill="none" stroke="#6a777a" stroke-width="1.2"/>
<path d="M1626 538 C1631 531 1644 532 1649 541 L1461 856 L1439 848 Z" fill="url(#g12)" />
<path d="M1457 860 L1769 795 C1800 797 1860 808 1890 816 L1887.6 829 L1539 960 C1532 961 1527 955 1528 950 L1529 933 C1530 925 1534 918 1539 911 L1489.5 866 L1460 860 Z" fill="#829296" />
<path d="M1457 860 L1769 795 C1800 797 1860 808 1890 816 L1887 821 L1539 906 L1489.5 866 L1460 860 Z" fill="url(#g13)" />
<path d="M1489 868 L1537 910" fill="none" stroke="#8fa0a3" stroke-width="8" stroke-linecap="round"/>
<path d="M1385 788 L1409 804 C1412 815 1420 821 1433 822 C1447 822 1460 812 1469 804 L1446 850 L1440 852 Z" fill="#5e6b6e" />
<path d="M1357 782 L1412 774 L1408 806 L1392 793 Z" fill="#3e4749" />
<path d="M1440 850 L1462 858 L1492 866 C1490 873 1486 879 1478 879 C1468 879 1457 868 1448 858 Z" fill="#869598" />
<path d="M1361 784 L1451 855 C1457 868 1468 879 1479 879 C1486 878 1490 873 1492 868" fill="none" stroke="#8e9ea1" stroke-width="8" stroke-linecap="round" stroke-linejoin="round"/>
<path d="M1362 787 L1450 858" fill="none" stroke="#7a898c" stroke-width="1.5"/></g></svg>
<div class="a" style="left:1640px;top:119px;width:240px;height:75px;border:1px solid #b4d8e7;border-radius:4px;background:rgba(243,243,243,.85)"></div>
<div class="ex" style="left:1653px;top:132.5px;width:9px;height:9px"></div>
<div class="a" style="left:1665.2px;top:131.6px;font-size:10.8px;line-height:11px;color:#5b93b0">Scene</div>
<div class="ex" style="left:1669px;top:151.5px"></div>
<div class="ex p" style="left:1685px;top:170.5px"></div>
<svg class="a" style="left:1683px;top:152.5px" width="12" height="8" viewBox="0 0 12 8"><path d="M0.5 4Q6 -1.5 11.5 4Q6 9.5 0.5 4Z" fill="#888"/><circle cx="6" cy="4" r="1.6" fill="#ddd"/></svg>
<svg class="a" style="left:1699px;top:171.5px" width="12" height="8" viewBox="0 0 12 8"><path d="M0.5 4Q6 -1.5 11.5 4Q6 9.5 0.5 4Z" fill="#888"/><circle cx="6" cy="4" r="1.6" fill="#ddd"/></svg>
<div class="a" style="left:1699px;top:150.7px;font-size:10.9px;line-height:11px;color:#5b93b0">Mesh 1</div>
<div class="a" style="left:1715.2px;top:169.4px;font-size:10.7px;line-height:11px;color:#5b93b0">region0</div>
<svg class="a" style="left:1870px;top:184px" width="8" height="8"><path d="M1 7L7 1M4 7L7 4" stroke="#777" stroke-width="1"/></svg>
<svg class="a" style="left:850px;top:940px" width="100" height="90" viewBox="850 940 100 90">
<path d="M897 1009.7L877.5 993" stroke="#3d9a3d" stroke-width="1.6"/><circle cx="877" cy="993" r="2" fill="#3d9a3d"/>
<path d="M897 1009.7L914 980" stroke="#7070ee" stroke-width="1.6"/><path d="M916.5 975.5L911 981L916.5 983Z" fill="#7070ee"/>
<path d="M897 1009.7L916 1011" stroke="#cc2020" stroke-width="1.6"/><circle cx="916" cy="1011" r="2.3" fill="#dd1111"/>
<text x="910" y="972.5" font-family="Liberation Sans" font-weight="700" font-size="26" fill="#7777ff" transform="translate(910 972.5) scale(1 1) translate(-910 -972.5)">Z</text>
<text x="864.5" y="991.5" font-family="Liberation Sans" font-weight="700" font-size="20.5" fill="#33aa33" transform="translate(864.5 991.5) scale(0.85 1) translate(-864.5 -991.5)">Y</text>
<text x="916" y="1015.5" font-family="Liberation Sans" font-weight="700" font-size="19.5" fill="#dd1111" transform="translate(916 1015.5) scale(0.8 1) skewX(-10) translate(-916 -1015.5)">X</text>
</svg>
<div class="a" style="left:827px;top:1054px;width:198px;height:26px;border:1px solid #c2dbe6;border-radius:4px;background:rgba(228,228,228,.9)"></div>
<div class="a" style="left:835px;top:1061.7px;font-size:11px;line-height:11px;color:#9fb4c0">solid_0_solid_0_face_35</div>
<svg class="a" style="left:1015px;top:1070px" width="8" height="8"><path d="M1 7L7 1M4 7L7 4" stroke="#888" stroke-width="1"/></svg>
</body></html>
